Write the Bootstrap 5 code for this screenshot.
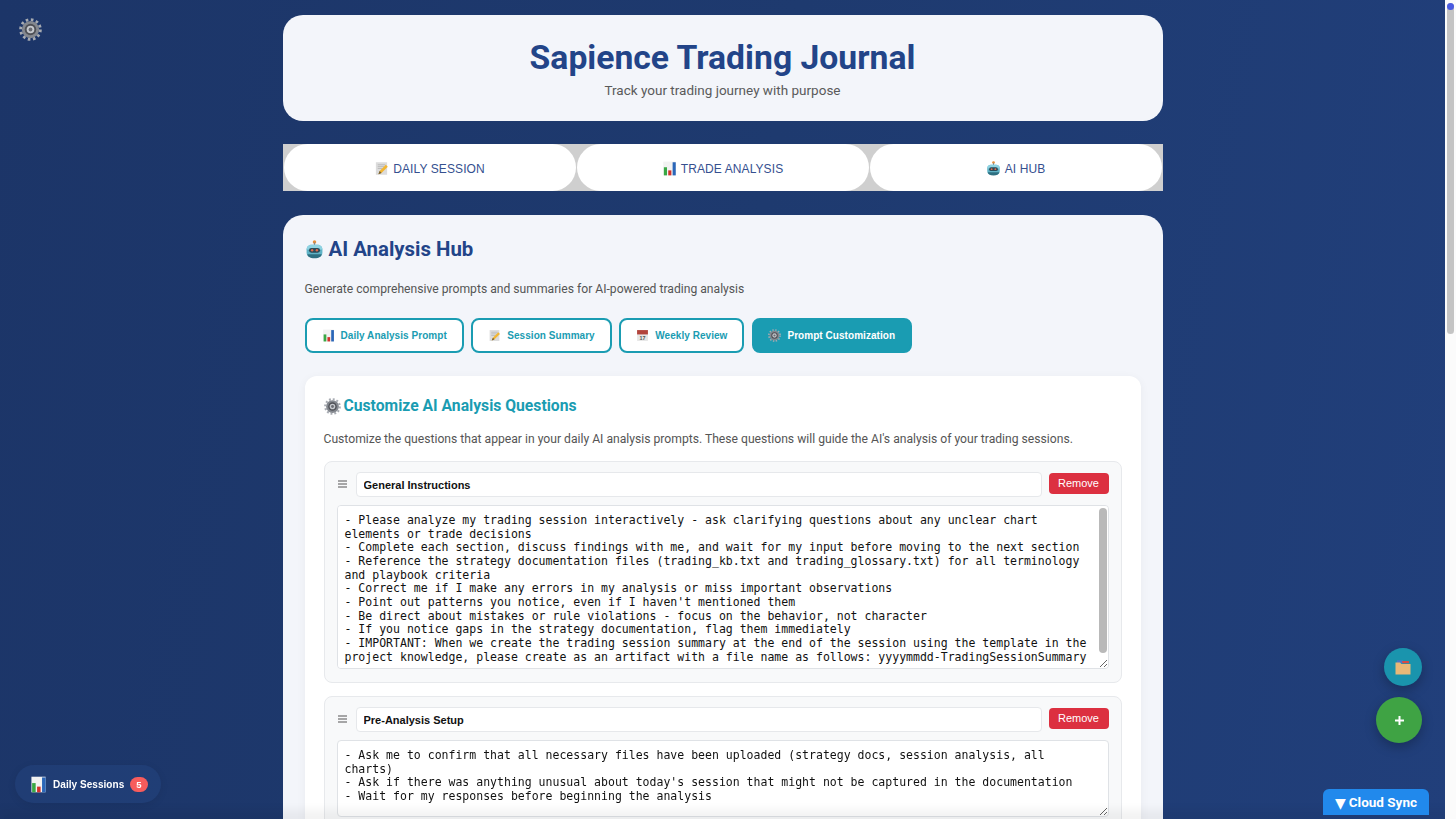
<!doctype html>
<html lang="en"><head><meta charset="utf-8"><title>Sapience Trading Journal</title>
<link href="https://cdn.jsdelivr.net/npm/bootstrap@5.3.0/dist/css/bootstrap.min.css" rel="stylesheet">
<style>
body{background:linear-gradient(100deg,#1c3568 0%,#1e3a6f 50%,#213f7b 100%) fixed;font-family:Roboto,"Noto Sans",sans-serif;color:#555;padding-right:11px}
.wrap-main{width:880px;margin:0 auto;padding-top:15px}
.hero{height:106px;background:#f3f5fa;border-radius:20px;margin-bottom:23px;padding-top:22px;text-align:center}
.hero h1{font-size:33.7px;line-height:41px;font-weight:700;color:#224488;margin:0}
.hero p{font-size:13.5px;line-height:24px;margin:0;color:#5a5a5a}
.tabbar{height:47px;background:#cfcfcf;margin-bottom:24px;gap:1px;padding:0 1px}
.tabbar .nav-link{flex:1;background:#fff;border-radius:24px;color:#35508f;font-family:"Liberation Sans",sans-serif;font-size:12px;letter-spacing:.1px;text-transform:uppercase;padding:2px 0 0;display:flex;align-items:center;justify-content:center;gap:4px}
.panel{background:#f3f5fa;border-radius:20px;padding:22px;border:0;min-height:1800px}
.panel h2{font-size:20.4px;line-height:24px;font-weight:700;color:#224488;margin:0 0 18px;display:flex;align-items:center;gap:5px}
.panel-sub{font-size:12.15px;line-height:20px;margin:0 0 19px;color:#555}
.tool-btn{height:35px;border:2px solid #1a9cb2;border-radius:8px;background:#fff;color:#1a9cb2;font-family:"Liberation Sans",sans-serif;font-size:10px;font-weight:700;letter-spacing:.05px;display:flex;align-items:center;gap:6px;padding:0 15px}
.tool-btn.on{background:#1a9cb2;color:#fff;padding:0 14.5px}
.tool-row{gap:7.5px;margin-bottom:23px}
.inner{background:#fff;border:0;border-radius:12px;padding:18px 19px;box-shadow:0 2px 10px rgba(0,0,0,.05)}
.inner h3{font-size:15.7px;line-height:24px;font-weight:700;color:#1a9cb2;margin:0 0 11px;display:flex;align-items:center;gap:3px}
.inner-sub{font-size:12.15px;line-height:20px;margin:0 0 12px;color:#555}
.qcard{background:#f8f9fa;border:1px solid #e7e9ec;border-radius:8px;padding:10px 12px 13px;margin-bottom:13px}
.qhead{display:flex;align-items:flex-start;gap:7px;margin-bottom:8px}
.grip{flex:none;width:12px;margin-top:8px;display:block}
.qtitle{height:25px;padding:0 7px;font-family:"Liberation Sans",sans-serif;font-size:11px;font-weight:700;color:#111;border:1px solid #e6e8eb;border-radius:4px;background:#fff}
.rm{flex:none;width:60px;height:21px;margin-top:1px;padding:0;background:#dc3040;border:0;border-radius:4px;font-family:"Liberation Sans",sans-serif;font-size:11px;color:#fff;line-height:21px}
.qtext-box{position:relative}
.qtext{display:block;width:100%;resize:vertical;font-family:"DejaVu Sans Mono",monospace;font-size:11.53px;line-height:13.65px;color:#111;padding:8px 17px 8px 7px;border:1px solid #dfe2e6;border-radius:4px;background:#fff;white-space:pre-wrap}
.qtext-thumb{position:absolute;right:2px;top:3px;width:8px;height:145px;background:#b9b9b9;border-radius:4px}
.gear-fab{position:fixed;left:19px;top:18px;width:23px;height:23px}
.sess-pill{position:fixed;left:15px;top:765px;width:146px;height:38px;border-radius:19px;background:rgba(45,85,150,.25);box-shadow:0 2px 8px rgba(0,0,0,.08);display:flex;align-items:center;padding-left:15px;gap:6px;color:#fff;font-family:"Liberation Sans",sans-serif;font-size:10px;font-weight:700;letter-spacing:.05px}
.sess-badge{background:#f75c5c;color:#fff;font-size:9.5px;border-radius:8px;padding:2px 6px;line-height:11px;font-weight:700}
.fab{position:fixed;border-radius:50%;display:flex;align-items:center;justify-content:center;box-shadow:0 4px 12px rgba(0,0,0,.25);border:0;padding:0}
.fab-folder{left:1384px;top:648px;width:38px;height:38px;background:#1a94ad}
.fab-add{left:1376px;top:697px;width:46px;height:46px;background:#3fa344;color:#fff}
.bottom-glow{position:fixed;left:0;right:0;bottom:-2px;height:2px;box-shadow:0 -2px 14px 2px rgba(0,0,0,.14)}
.sync-tab{position:fixed;left:1323px;top:789px;width:106px;height:26px;padding-top:1px;background:#2189ec;color:#fff;border-radius:6px 6px 0 0;font-size:13.5px;font-weight:700;display:flex;align-items:center;justify-content:center;gap:3px;line-height:1}
.sync-tab span:first-child{font-family:"DejaVu Sans",sans-serif;font-size:14px}
.page-track{position:fixed;left:1445px;top:0;bottom:0;width:11px;background:#fbfbfb}
.page-thumb{position:fixed;left:1447px;top:3px;width:7px;height:331px;border-radius:4px;background:#c4c4c4}
.scroll-dot{position:fixed;left:1447px;top:3px;width:7px;height:7px;border-radius:50%;background:#4a5be0}
</style></head>
<body>
<svg width="0" height="0" class="position-absolute">
<defs>
<symbol id="gear" viewBox="0 0 24 24"><circle cx="12" cy="12" r="10.3" fill="none" stroke="#a7abb2" stroke-width="3" stroke-dasharray="2.7 2.7"/><circle cx="12" cy="12" r="9" fill="#84888f"/><circle cx="12" cy="12" r="6" fill="#4e5056"/><circle cx="12" cy="12" r="4" fill="#c6c9ce"/><circle cx="12" cy="12" r="2" fill="#6a6c72"/></symbol>
<symbol id="memo" viewBox="0 0 24 24"><rect x="3" y="2" width="18" height="20" fill="#dcdcdc"/><path d="M6 6h12M6 9h10M6 12h7" stroke="#aaa"/><path d="M7 21l2-5L19 6l3 3-10 10z" fill="#f2b632"/><path d="M7 21l2-5 3 3z" fill="#6b5a3a"/></symbol>
<symbol id="chart" viewBox="0 0 24 24"><rect x="2" y="1" width="20" height="22" fill="#f2f2f2"/><rect x="3" y="10" width="5" height="13" fill="#3aa845"/><rect x="10" y="15" width="5" height="8" fill="#d3322c"/><rect x="17" y="2" width="5" height="21" fill="#2a66b8"/></symbol>
<symbol id="robot" viewBox="0 0 24 24"><circle cx="12" cy="2.5" r="2.2" fill="#e8903a"/><rect x="11.2" y="3" width="1.6" height="4" fill="#888"/><rect x="2" y="6" width="20" height="16" rx="6" fill="#5fb3c6"/><path d="M2 12c0-4 3-6 6-6h8c3 0 6 2 6 6z" fill="#8fd3e2"/><rect x="5" y="10" width="14" height="6" rx="3" fill="#2b4a57"/><circle cx="9" cy="13" r="1.5" fill="#e06a4c"/><circle cx="15" cy="13" r="1.5" fill="#e06a4c"/><path d="M3 18h18c0 3-3 5-9 5s-9-2-9-5z" fill="#2e6f80"/></symbol>
<symbol id="cal" viewBox="0 0 24 24"><rect x="2" y="2" width="20" height="20" fill="#e6e6e6"/><rect x="2" y="2" width="20" height="8" fill="#b2443c"/><text x="12" y="20" font-size="10" text-anchor="middle" fill="#555" font-family="Liberation Sans">17</text></symbol>
<symbol id="folder" viewBox="0 0 24 24"><rect x="4" y="3" width="8" height="4" fill="#4a78c8"/><rect x="11" y="4" width="9" height="3" fill="#d94a44"/><path d="M2 6h6l2 2h12v14H2z" fill="#e8b878"/></symbol>
</defs></svg>

<main class="wrap-main">
<header class="hero"><h1>Sapience Trading Journal</h1><p>Track your trading journey with purpose</p></header>

<nav class="nav tabbar">
<a class="nav-link" href="#"><svg width="15" height="15"><use href="#memo"/></svg>Daily Session</a>
<a class="nav-link" href="#"><svg width="15" height="15"><use href="#chart"/></svg>Trade Analysis</a>
<a class="nav-link" href="#"><svg width="15" height="15"><use href="#robot"/></svg>AI Hub</a>
</nav>

<section class="card panel">
<h2><svg width="19" height="19"><use href="#robot"/></svg>AI Analysis Hub</h2>
<p class="panel-sub">Generate comprehensive prompts and summaries for AI-powered trading analysis</p>
<div class="d-flex tool-row">
<button class="btn tool-btn" type="button"><svg width="13" height="13"><use href="#chart"/></svg>Daily Analysis Prompt</button>
<button class="btn tool-btn" type="button"><svg width="13" height="13"><use href="#memo"/></svg>Session Summary</button>
<button class="btn tool-btn" type="button"><svg width="13" height="13"><use href="#cal"/></svg>Weekly Review</button>
<button class="btn tool-btn on" type="button"><svg width="13" height="13"><use href="#gear"/></svg>Prompt Customization</button>
</div>
<div class="card inner">
<h3><svg width="17" height="17"><use href="#gear"/></svg>Customize AI Analysis Questions</h3>
<p class="inner-sub">Customize the questions that appear in your daily AI analysis prompts. These questions will guide the AI's analysis of your trading sessions.</p>

<div class="qcard">
<div class="qhead"><svg class="grip" height="8" viewBox="0 0 12 8"><path d="M1 1h9M1 4h9M1 7h9" stroke="#555" stroke-width="1.2"/></svg><input class="form-control qtitle" value="General Instructions"><button class="btn btn-danger rm" type="button">Remove</button></div>
<div class="qtext-box"><textarea class="form-control qtext" style="height:164px">- Please analyze my trading session interactively - ask clarifying questions about any unclear chart elements or trade decisions
- Complete each section, discuss findings with me, and wait for my input before moving to the next section
- Reference the strategy documentation files (trading_kb.txt and trading_glossary.txt) for all terminology and playbook criteria
- Correct me if I make any errors in my analysis or miss important observations
- Point out patterns you notice, even if I haven't mentioned them
- Be direct about mistakes or rule violations - focus on the behavior, not character
- If you notice gaps in the strategy documentation, flag them immediately
- IMPORTANT: When we create the trading session summary at the end of the session using the template in the project knowledge, please create as an artifact with a file name as follows: yyyymmdd-TradingSessionSummary
</textarea><div class="qtext-thumb"></div></div>
</div>

<div class="qcard">
<div class="qhead"><svg class="grip" height="8" viewBox="0 0 12 8"><path d="M1 1h9M1 4h9M1 7h9" stroke="#555" stroke-width="1.2"/></svg><input class="form-control qtitle" value="Pre-Analysis Setup"><button class="btn btn-danger rm" type="button">Remove</button></div>
<div class="qtext-box"><textarea class="form-control qtext" style="height:77px">- Ask me to confirm that all necessary files have been uploaded (strategy docs, session analysis, all charts)
- Ask if there was anything unusual about today's session that might not be captured in the documentation
- Wait for my responses before beginning the analysis</textarea></div>
</div>
</div>
</section>
</main>

<button class="btn gear-fab p-0 border-0" type="button" aria-label="Settings"><svg width="23" height="23" class="d-block"><use href="#gear"/></svg></button>
<div class="sess-pill"><svg width="17" height="17"><use href="#chart"/></svg><span>Daily Sessions</span><span class="sess-badge">5</span></div>
<button class="fab fab-folder" type="button" aria-label="Files"><svg width="18" height="18"><use href="#folder"/></svg></button>
<button class="fab fab-add" type="button" aria-label="Add"><svg width="11" height="11" viewBox="0 0 11 11"><path d="M5.5 1v9M1 5.5h9" stroke="#fff" stroke-width="2"/></svg></button>
<div class="bottom-glow"></div>
<div class="sync-tab"><span>▼</span><span>Cloud Sync</span></div>
<div class="page-track"></div><div class="page-thumb"></div><div class="scroll-dot"></div>
</body></html>
